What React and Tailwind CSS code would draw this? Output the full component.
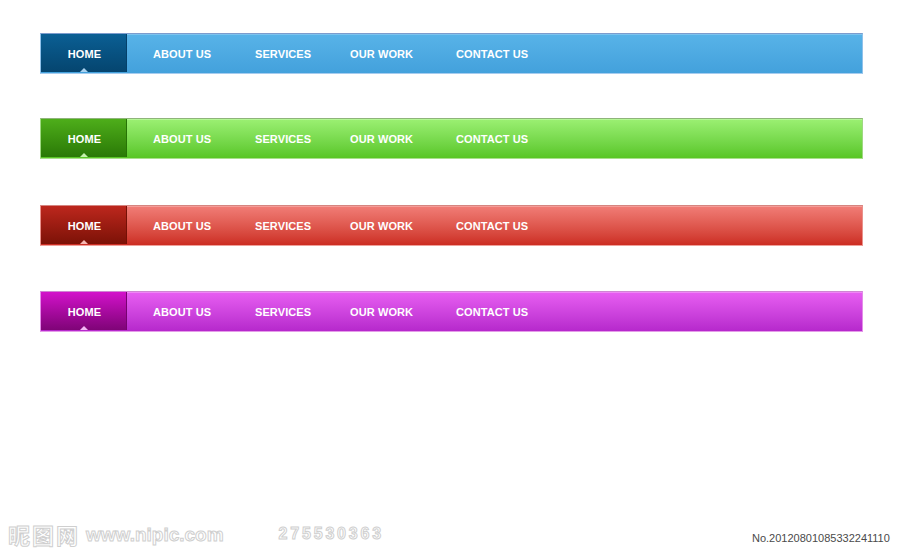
import React from 'react'

const items = [
  { label: 'ABOUT US', w: 'w-[102px]' },
  { label: 'SERVICES', w: 'w-[95px]' },
  { label: 'OUR WORK', w: 'w-[106px]' },
  { label: 'CONTACT US', w: '' },
]

const themes = [
  {
    mt: 'mt-0',
    border: 'border-t-[#7d9ccd] border-b-[#a6ccef] border-x-[#8fc1ea]',
    bar: 'bg-gradient-to-b from-[#58b3e8] to-[#43a1dc]',
    hl: 'bg-[#7cc3ee]',
    home: 'bg-gradient-to-b from-[#0b5f94] to-[#05456f] border-r-[#04406a]',
    arrow: 'border-b-[#a9d2f0]',
  },
  {
    mt: 'mt-[44px]',
    border: 'border-t-[#8fb47a] border-b-[#a9e08a] border-x-[#9fd882]',
    bar: 'bg-gradient-to-b from-[#9bf072] to-[#58c623]',
    hl: 'bg-[#b5f796]',
    home: 'bg-gradient-to-b from-[#4eae1a] to-[#2a7906] border-r-[#277305]',
    arrow: 'border-b-[#c6f1ad]',
  },
  {
    mt: 'mt-[46px]',
    border: 'border-t-[#d58580] border-b-[#efa09a] border-x-[#e9918b]',
    bar: 'bg-gradient-to-b from-[#f17d77] to-[#cc2c22]',
    hl: 'bg-[#f59d98]',
    home: 'bg-gradient-to-b from-[#bd271d] to-[#7c1207] border-r-[#741005]',
    arrow: 'border-b-[#f6b7b2]',
  },
  {
    mt: 'mt-[45px]',
    border: 'border-t-[#cf86d2] border-b-[#e59be9] border-x-[#e38ce9]',
    bar: 'bg-gradient-to-b from-[#e85ef2] to-[#b628cc]',
    hl: 'bg-[#ef86f6]',
    home: 'bg-gradient-to-b from-[#d312cb] to-[#7f0477] border-r-[#76036f]',
    arrow: 'border-b-[#f3b8f5]',
  },
]

function NavBar({ t }) {
  return (
    <div className={`${t.mt} w-[823px] h-[41px] border-y border-x ${t.border} ${t.bar} relative flex`}>
      <div className={`absolute left-0 right-0 top-0 h-px ${t.hl}`} />
      <div className={`relative w-[86px] h-[38px] pt-[3px] pl-[2px] border-r ${t.home} flex items-center justify-center`}>
        <span>HOME</span>
        <div className={`absolute bottom-0 left-[39px] w-0 h-0 border-x-[4px] border-x-transparent border-b-[4px] ${t.arrow}`} />
      </div>
      <div className="flex items-center ml-[26px] h-[38px] pt-[3px]">
        {items.map(i => (
          <span key={i.label} className={i.w}>{i.label}</span>
        ))}
      </div>
    </div>
  )
}

export default function App() {
  return (
    <div className="w-[900px] h-[550px] bg-white relative overflow-hidden">
      <div
        className="pt-[33px] pl-[40px] flex flex-col text-white text-[11px] font-bold tracking-[0.1px]"
        style={{ fontFamily: '"Liberation Sans", Arial, sans-serif' }}
      >
        {themes.map((t, i) => (
          <NavBar key={i} t={t} />
        ))}
      </div>

      {/* watermark */}
      <div className="absolute left-[8px] top-[521px] h-[26px] flex items-center leading-none text-transparent [-webkit-text-stroke:1px_#cfcfcf] font-bold">
        <span className="text-[22px] tracking-[2px]" style={{ fontFamily: '"Noto Sans CJK SC", sans-serif' }}>昵图网</span>
        <span className="ml-[6px] text-[19px]" style={{ fontFamily: '"Liberation Sans", Arial, sans-serif' }}>www.nipic.com</span>
        <span className="ml-[55px] text-[16px] tracking-[2.8px]" style={{ fontFamily: '"Liberation Sans", Arial, sans-serif' }}>275530363</span>
      </div>
      <div
        className="absolute left-[752px] top-[530px] text-[11px] text-[#4a4a4a]"
        style={{ fontFamily: '"Liberation Sans", Arial, sans-serif' }}
      >
        No.20120801085332241110
      </div>
    </div>
  )
}
